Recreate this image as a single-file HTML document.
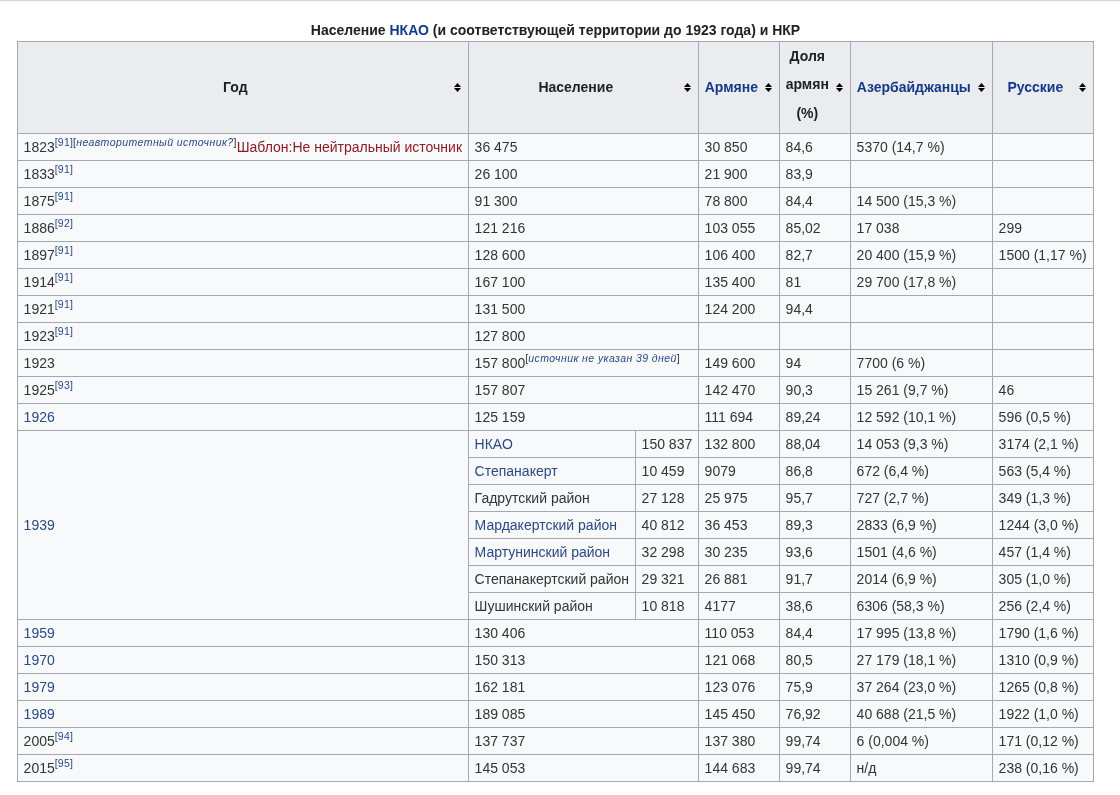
<!DOCTYPE html>
<html><head><meta charset="utf-8">
<style>
html,body{margin:0;padding:0;background:#fff;}
body{width:1120px;height:795px;overflow:hidden;position:relative;font-family:"Liberation Sans",sans-serif;font-size:14px;color:#202122;}
.topline{position:absolute;left:0;top:0;width:1120px;height:1px;background:#d8d8d8;}
.topline2{position:absolute;left:0;top:1px;width:1120px;height:1px;background:#f3f3f3;}
.cap{will-change:transform;position:absolute;left:17px;top:20px;width:1077px;text-align:center;font-weight:bold;line-height:20px;}
a{color:#2a4a84;text-decoration:none;}
th a,.cap a{color:#143a86;}
table{will-change:transform;position:absolute;left:17px;top:41px;border-collapse:collapse;table-layout:fixed;background:#f8f9fa;color:#333435;width:1077px;}
td,th{border:1px solid #a2a9b1;padding:0 5.6px;line-height:26px;height:26px;vertical-align:middle;white-space:nowrap;}
th{color:#202122;background:#eaecf0;font-weight:bold;text-align:center;position:relative;padding-right:21px;height:91px;}
th.ml{line-height:28.5px;white-space:normal;}
th .t{position:relative;top:-1px;}
th.ml .t{top:-3px;}
.sort{position:absolute;right:7px;top:50%;margin-top:-4.5px;width:7px;height:9px;}
sup{letter-spacing:0.2px;font-size:10.5px;line-height:1;vertical-align:baseline;position:relative;top:-6px;}
.fix{font-style:italic;letter-spacing:0.42px;}
.red{color:#8e1d22;}
</style></head><body>
<div class="topline"></div><div class="topline2"></div>
<div class="cap">Население <a>НКАО</a> (и соответствующей территории до 1923 года) и НКР</div>
<table>
<colgroup><col style="width:451px"><col style="width:167px"><col style="width:63px"><col style="width:81px"><col style="width:71px"><col style="width:142px"><col style="width:101px"></colgroup>
<tr><th><span class="t">Год</span><svg class="sort" viewBox="0 0 7 9"><path d="M0 4L3.5 0L7 4Z M0 5L7 5L3.5 9Z" fill="#000"/></svg></th><th colspan="2"><span class="t">Население</span><svg class="sort" viewBox="0 0 7 9"><path d="M0 4L3.5 0L7 4Z M0 5L7 5L3.5 9Z" fill="#000"/></svg></th><th><span class="t"><a>Армяне</a></span><svg class="sort" viewBox="0 0 7 9"><path d="M0 4L3.5 0L7 4Z M0 5L7 5L3.5 9Z" fill="#000"/></svg></th><th class="ml"><span class="t">Доля армян (%)</span><svg class="sort" viewBox="0 0 7 9"><path d="M0 4L3.5 0L7 4Z M0 5L7 5L3.5 9Z" fill="#000"/></svg></th><th><span class="t"><a>Азербайджанцы</a></span><svg class="sort" viewBox="0 0 7 9"><path d="M0 4L3.5 0L7 4Z M0 5L7 5L3.5 9Z" fill="#000"/></svg></th><th><span class="t"><a>Русские</a></span><svg class="sort" viewBox="0 0 7 9"><path d="M0 4L3.5 0L7 4Z M0 5L7 5L3.5 9Z" fill="#000"/></svg></th></tr>
<tr><td>1823<sup><a>[91]</a>[<a class="fix">неавторитетный источник?</a>]</sup><span class="red">Шаблон:Не нейтральный источник</span></td><td colspan="2">36 475</td><td>30 850</td><td>84,6</td><td>5370 (14,7 %)</td><td></td></tr>
<tr><td>1833<sup><a>[91]</a></sup></td><td colspan="2">26 100</td><td>21 900</td><td>83,9</td><td></td><td></td></tr>
<tr><td>1875<sup><a>[91]</a></sup></td><td colspan="2">91 300</td><td>78 800</td><td>84,4</td><td>14 500 (15,3 %)</td><td></td></tr>
<tr><td>1886<sup><a>[92]</a></sup></td><td colspan="2">121 216</td><td>103 055</td><td>85,02</td><td>17 038</td><td>299</td></tr>
<tr><td>1897<sup><a>[91]</a></sup></td><td colspan="2">128 600</td><td>106 400</td><td>82,7</td><td>20 400 (15,9 %)</td><td>1500 (1,17 %)</td></tr>
<tr><td>1914<sup><a>[91]</a></sup></td><td colspan="2">167 100</td><td>135 400</td><td>81</td><td>29 700 (17,8 %)</td><td></td></tr>
<tr><td>1921<sup><a>[91]</a></sup></td><td colspan="2">131 500</td><td>124 200</td><td>94,4</td><td></td><td></td></tr>
<tr><td>1923<sup><a>[91]</a></sup></td><td colspan="2">127 800</td><td></td><td></td><td></td><td></td></tr>
<tr><td>1923</td><td colspan="2">157 800<sup>[<a class="fix">источник не указан 39 дней</a>]</sup></td><td>149 600</td><td>94</td><td>7700 (6 %)</td><td></td></tr>
<tr><td>1925<sup><a>[93]</a></sup></td><td colspan="2">157 807</td><td>142 470</td><td>90,3</td><td>15 261 (9,7 %)</td><td>46</td></tr>
<tr><td><a>1926</a></td><td colspan="2">125 159</td><td>111 694</td><td>89,24</td><td>12 592 (10,1 %)</td><td>596 (0,5 %)</td></tr>
<tr><td rowspan="7"><a>1939</a></td><td><a>НКАО</a></td><td>150 837</td><td>132 800</td><td>88,04</td><td>14 053 (9,3 %)</td><td>3174 (2,1 %)</td></tr>
<tr><td><a>Степанакерт</a></td><td>10 459</td><td>9079</td><td>86,8</td><td>672 (6,4 %)</td><td>563 (5,4 %)</td></tr>
<tr><td>Гадрутский район</td><td>27 128</td><td>25 975</td><td>95,7</td><td>727 (2,7 %)</td><td>349 (1,3 %)</td></tr>
<tr><td><a>Мардакертский район</a></td><td>40 812</td><td>36 453</td><td>89,3</td><td>2833 (6,9 %)</td><td>1244 (3,0 %)</td></tr>
<tr><td><a>Мартунинский район</a></td><td>32 298</td><td>30 235</td><td>93,6</td><td>1501 (4,6 %)</td><td>457 (1,4 %)</td></tr>
<tr><td>Степанакертский район</td><td>29 321</td><td>26 881</td><td>91,7</td><td>2014 (6,9 %)</td><td>305 (1,0 %)</td></tr>
<tr><td>Шушинский район</td><td>10 818</td><td>4177</td><td>38,6</td><td>6306 (58,3 %)</td><td>256 (2,4 %)</td></tr>
<tr><td><a>1959</a></td><td colspan="2">130 406</td><td>110 053</td><td>84,4</td><td>17 995 (13,8 %)</td><td>1790 (1,6 %)</td></tr>
<tr><td><a>1970</a></td><td colspan="2">150 313</td><td>121 068</td><td>80,5</td><td>27 179 (18,1 %)</td><td>1310 (0,9 %)</td></tr>
<tr><td><a>1979</a></td><td colspan="2">162 181</td><td>123 076</td><td>75,9</td><td>37 264 (23,0 %)</td><td>1265 (0,8 %)</td></tr>
<tr><td><a>1989</a></td><td colspan="2">189 085</td><td>145 450</td><td>76,92</td><td>40 688 (21,5 %)</td><td>1922 (1,0 %)</td></tr>
<tr><td>2005<sup><a>[94]</a></sup></td><td colspan="2">137 737</td><td>137 380</td><td>99,74</td><td>6 (0,004 %)</td><td>171 (0,12 %)</td></tr>
<tr><td>2015<sup><a>[95]</a></sup></td><td colspan="2">145 053</td><td>144 683</td><td>99,74</td><td>н/д</td><td>238 (0,16 %)</td></tr>
</table>
</body></html>
